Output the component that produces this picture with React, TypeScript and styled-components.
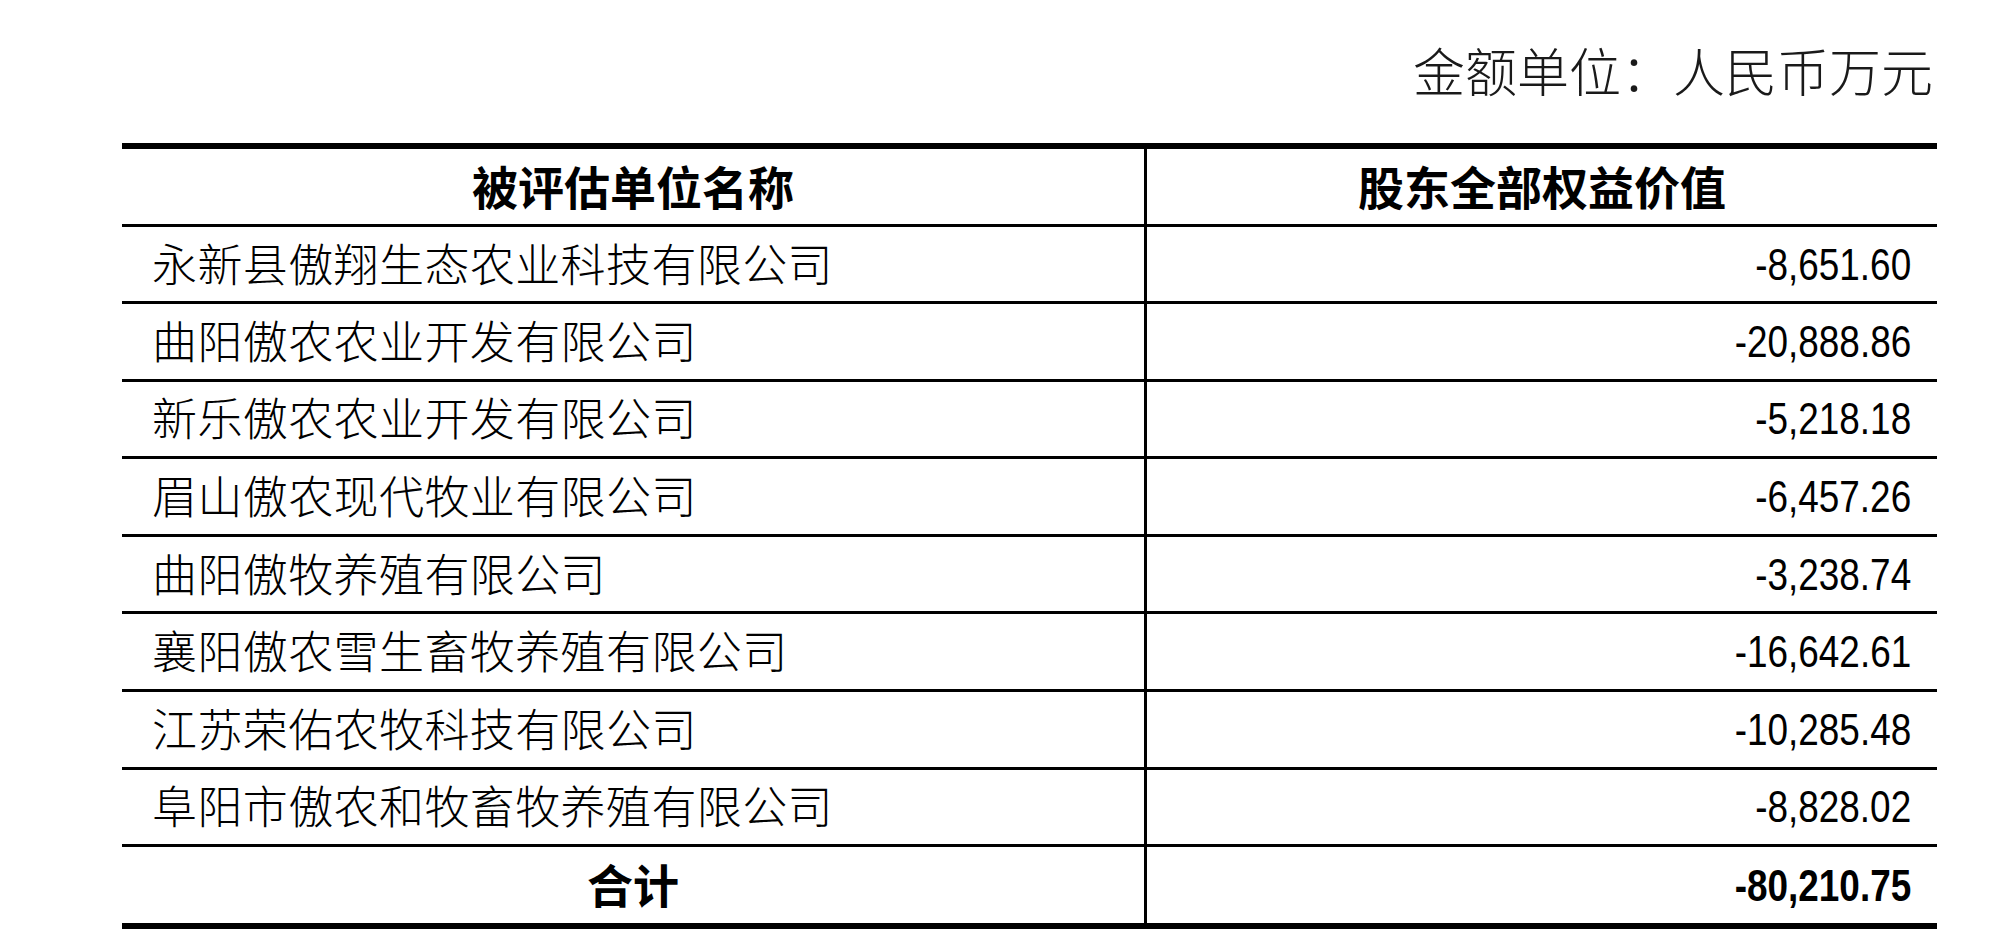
import React from 'react';
import styled, { createGlobalStyle } from 'styled-components';

// valuation table: 股东全部权益价值 per evaluated entity

const GlobalStyle = createGlobalStyle`
  *, *::before, *::after {
    box-sizing: border-box;
  }
  html, body {
    margin: 0;
    padding: 0;
    background: #ffffff;
  }
  body {
    font-family: 'Noto Sans CJK SC', 'Liberation Sans', sans-serif;
    color: #000;
  }
`;

type Row = {
  name: string;
  value: string;
};

const rows: Row[] = [
  { name: '永新县傲翔生态农业科技有限公司', value: '-8,651.60' },
  { name: '曲阳傲农农业开发有限公司', value: '-20,888.86' },
  { name: '新乐傲农农业开发有限公司', value: '-5,218.18' },
  { name: '眉山傲农现代牧业有限公司', value: '-6,457.26' },
  { name: '曲阳傲牧养殖有限公司', value: '-3,238.74' },
  { name: '襄阳傲农雪生畜牧养殖有限公司', value: '-16,642.61' },
  { name: '江苏荣佑农牧科技有限公司', value: '-10,285.48' },
  { name: '阜阳市傲农和牧畜牧养殖有限公司', value: '-8,828.02' },
];

const Page = styled.div`
  width: 1937px;
  padding-left: 122px;
`;

const Unit = styled.div`
  display: flex;
  justify-content: flex-end;
  padding: 44px 4px 0 0;
  height: 143px;
  font-size: 52px;
  line-height: 1;
  font-weight: 300;
  color: #1a1a1a;
`;

const Table = styled.div`
  border-top: 6px solid #000;
  border-bottom: 6px solid #000;
`;

const TableRow = styled.div<{ $height: number; $last?: boolean }>`
  display: grid;
  grid-template-columns: 1025px 1fr;
  height: ${(p) => p.$height}px;
  border-bottom: ${(p) => (p.$last ? 'none' : '3px solid #000')};
`;

const NameCell = styled.div<{ $center?: boolean; $bold?: boolean }>`
  display: flex;
  align-items: center;
  justify-content: ${(p) => (p.$center ? 'center' : 'flex-start')};
  padding: 0 0 4px ${(p) => (p.$center ? '0' : '30px')};
  border-right: 3px solid #000;
  font-size: ${(p) => (p.$bold ? '46px' : '45px')};
  font-weight: ${(p) => (p.$bold ? 700 : 300)};
  line-height: 1;
  letter-spacing: ${(p) => (p.$bold ? '0' : '0.4px')};
  white-space: nowrap;
`;

const HeadValue = styled.div`
  display: flex;
  align-items: center;
  justify-content: center;
  padding-bottom: 4px;
  font-size: 46px;
  font-weight: 700;
  line-height: 1;
  white-space: nowrap;
`;

const ValueCell = styled.div`
  display: flex;
  align-items: center;
  justify-content: flex-end;
  padding-right: 26px;
`;

const Amount = styled.span<{ $bold?: boolean }>`
  display: inline-block;
  font-family: 'Liberation Sans', Arial, sans-serif;
  font-size: 45px;
  font-weight: ${(p) => (p.$bold ? 700 : 400)};
  line-height: 1;
  transform: scaleX(0.82);
  transform-origin: right center;
  white-space: nowrap;
`;

export default function App() {
  return (
    <>
      <GlobalStyle />
      <Page>
        <Unit>金额单位：人民币万元</Unit>
        <Table>
          <TableRow $height={78}>
            <NameCell $center $bold>
              被评估单位名称
            </NameCell>
            <HeadValue>股东全部权益价值</HeadValue>
          </TableRow>
          {rows.map((row, i) => (
            <TableRow key={`${row.name}-${i}`} $height={i === 0 ? 77 : 77.6}>
              <NameCell>{row.name}</NameCell>
              <ValueCell>
                <Amount>{row.value}</Amount>
              </ValueCell>
            </TableRow>
          ))}
          <TableRow $height={76} $last>
            <NameCell $center $bold>
              合计
            </NameCell>
            <ValueCell>
              <Amount $bold>-80,210.75</Amount>
            </ValueCell>
          </TableRow>
        </Table>
      </Page>
    </>
  );
}
